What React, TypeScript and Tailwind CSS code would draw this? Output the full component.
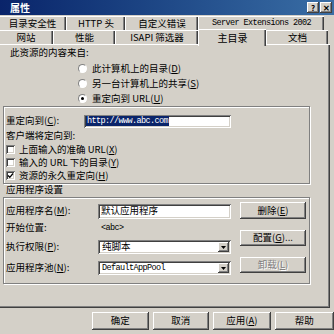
import React from "react";

const raised =
  "bg-[#d4d0c8] shadow-[inset_-1px_-1px_#404040,inset_1px_1px_#ffffff,inset_-2px_-2px_#808080,inset_2px_2px_#d4d0c8]";
const sunken =
  "shadow-[inset_1px_1px_#808080,inset_-1px_-1px_#ffffff,inset_2px_2px_#404040,inset_-2px_-2px_#d4d0c8]";
const etched = "border border-[#808080] shadow-[1px_1px_#ffffff,inset_1px_1px_#ffffff]";
const latin = "font-['Liberation_Mono',monospace] text-[8.5px] tracking-[-0.6px]";

function U({ children }: { children: React.ReactNode }) {
  return <span className="underline">{children}</span>;
}

function Radio({ checked, children }: { checked?: boolean; children: React.ReactNode }) {
  return (
    <div className="flex h-[15px] items-center gap-[5px]">
      <span className="relative flex h-[9px] w-[9px] items-center justify-center rounded-full border border-t-[#808080] border-l-[#808080] border-b-white border-r-white bg-white">
        {checked && <span className="h-[3px] w-[3px] rounded-full bg-black" />}
      </span>
      <span>{children}</span>
    </div>
  );
}

function Check({ checked, children }: { checked?: boolean; children: React.ReactNode }) {
  return (
    <div className="flex h-[13px] items-center gap-[4px]">
      <span className={`flex h-[9px] w-[9px] items-center justify-center bg-white ${sunken}`}>
        {checked && (
          <svg width="7" height="7" viewBox="0 0 7 7">
            <path d="M1 3.5 L2.8 5.3 L6 1.5" stroke="#000" strokeWidth="1.3" fill="none" />
          </svg>
        )}
      </span>
      <span>{children}</span>
    </div>
  );
}

function Select({ value }: { value: string }) {
  return (
    <div className={`flex h-[14px] w-[133px] items-center bg-white p-[2px] ${sunken}`}>
      <span className={`flex-1 pl-[2px] leading-none ${/^[A-Za-z]/.test(value) ? latin : ""}`}>{value}</span>
      <span className={`flex h-[10px] w-[11px] items-center justify-center ${raised}`}>
        <svg width="5" height="3" viewBox="0 0 5 3">
          <path d="M0 0 H5 L2.5 3 Z" fill="#000" />
        </svg>
      </span>
    </div>
  );
}

function Button({
  children,
  className = "",
  disabled,
}: {
  children: React.ReactNode;
  className?: string;
  disabled?: boolean;
}) {
  return (
    <div
      className={`flex items-center justify-center ${raised} ${
        disabled ? "text-[#808080] [text-shadow:1px_1px_#ffffff]" : ""
      } ${className}`}
    >
      {children}
    </div>
  );
}

function Tab({
  label,
  w,
  className = "",
  mono,
}: {
  label: string;
  w: string;
  className?: string;
  mono?: boolean;
}) {
  return (
    <div
      className={`flex h-full items-center justify-center border-t border-l border-t-white border-l-white shadow-[inset_-1px_0_#404040,inset_-2px_0_#808080] ${w} ${className}`}
    >
      <span className={mono ? latin : ""}>{label}</span>
    </div>
  );
}

export default function App() {
  return (
    <div className="h-[334px] w-[334px] overflow-hidden bg-[#d4d0c8] font-['Noto_Sans_CJK_SC',sans-serif] text-[9.5px] leading-none text-black">
      {/* Title bar */}
      <div className="flex h-[15px] items-center bg-gradient-to-r from-[#0a246a] to-[#3a6ea5] pr-[2px]">
        <span className="pl-[10px] text-[10px] font-bold text-white">属性</span>
        <div className="ml-auto flex gap-[1px]">
          <Button className="h-[11px] w-[12px] text-[8px] font-bold">?</Button>
          <Button className="h-[11px] w-[12px] text-[8px] font-bold">✕</Button>
        </div>
      </div>

      {/* Tabs row 1 */}
      <div className="mt-[1px] flex h-[14px] pr-[6px]">
        <Tab label="目录安全性" w="w-[68px] -ml-[2px]" />
        <Tab label="HTTP 头" w="w-[59px]" />
        <Tab label="自定义错误" w="w-[73px]" />
        <Tab label="Server Extensions 2002" w="w-[126px]" mono />
      </div>

      {/* Tabs row 2 */}
      <div className="relative z-10 flex h-[14px] items-end pr-[4px]">
        <Tab label="网站" w="w-[55px] -ml-[2px]" className="h-[14px]" />
        <Tab label="性能" w="w-[62px]" className="h-[14px]" />
        <Tab label="ISAPI 筛选器" w="w-[83px]" className="h-[14px]" />
        <div className="-mb-[2px] flex h-[17px] w-[68px] items-center justify-center border-t border-l border-t-white border-l-white bg-[#d4d0c8] shadow-[inset_-1px_0_#404040,inset_-2px_0_#808080] text-[10px]">
          主目录
        </div>
        <Tab label="文档" w="w-[62px]" className="h-[14px]" />
      </div>

      {/* Panel */}
      <div className="mr-[4px] flex h-[264px] flex-col border-t border-t-white shadow-[inset_-1px_-1px_#404040,inset_-2px_-2px_#808080]">
        <div className="mt-[2px] flex h-[12px] items-center pl-[10px]">此资源的内容来自:</div>

        <div className="mt-[2px] flex flex-col pl-[78px]">
          <Radio>
            此计算机上的目录(<U>D</U>)
          </Radio>
          <Radio>
            另一台计算机上的共享(<U>S</U>)
          </Radio>
          <Radio checked>
            重定向到 URL(<U>U</U>)
          </Radio>
        </div>

        {/* Redirect group */}
        <div className={`ml-[3px] flex h-[78px] w-[307px] flex-col pl-[2px] ${etched}`}>
          <div className="mt-[8px] flex h-[12px] items-center">
            <span className="w-[78px]">
              重定向到(<U>C</U>):
            </span>
            <div className={`flex h-[13px] w-[147px] items-center bg-white px-[2px] ${sunken}`}>
              <span className={`bg-[#0a246a] px-[1px] py-[1px] text-white ${latin}`}>
                http://www.abc.com
              </span>
            </div>
          </div>
          <div className="mt-[3px] flex h-[12px] items-center">客户端将定向到:</div>
          <div className="mt-[1px] flex flex-col">
            <Check>
              上面输入的准确 URL(<U>X</U>)
            </Check>
            <Check>
              输入的 URL 下的目录(<U>Y</U>)
            </Check>
            <Check checked>
              资源的永久重定向(<U>H</U>)
            </Check>
          </div>
        </div>

        <div className="flex h-[12px] items-center pl-[6px]">应用程序设置</div>

        {/* App settings group */}
        <div className={`ml-[3px] mt-[1px] flex h-[87px] w-[307px] pl-[2px] ${etched}`}>
          <div className="flex w-[234px] flex-col">
            <div className="mt-[5px] flex h-[16px] items-center">
              <span className="w-[92px]">
                应用程序名(<U>M</U>):
              </span>
              <div className={`flex h-[15px] w-[133px] items-center bg-white px-[3px] ${sunken}`}>
                默认应用程序
              </div>
            </div>
            <div className="flex h-[18px] items-center">
              <span className="w-[95px]">开始位置:</span>
              <span className={latin}>&lt;abc&gt;</span>
            </div>
            <div className="mt-[2px] flex h-[16px] items-center">
              <span className="w-[92px]">
                执行权限(<U>P</U>):
              </span>
              <Select value="纯脚本" />
            </div>
            <div className="mt-[5px] flex h-[16px] items-center">
              <span className="w-[92px]">
                应用程序池(<U>N</U>):
              </span>
              <Select value="DefaultAppPool" />
            </div>
          </div>
          <div className="flex flex-col">
            <Button className="mt-[4px] h-[17px] w-[66px]">
              删除(<U>E</U>)
            </Button>
            <Button className="mt-[11px] h-[16px] w-[66px]">
              配置(<U>G</U>)...
            </Button>
            <Button disabled className="mt-[11px] h-[16px] w-[66px]">
              卸载(<U>L</U>)
            </Button>
          </div>
        </div>
      </div>

      {/* Bottom buttons */}
      <div className="mt-[4px] flex gap-[4px] pl-[92px]">
        <Button className="h-[18px] w-[57px]">确定</Button>
        <Button className="h-[18px] w-[57px]">取消</Button>
        <Button className="h-[18px] w-[58px]">
          应用(<U>A</U>)
        </Button>
        <Button className="h-[18px] w-[60px]">帮助</Button>
      </div>
    </div>
  );
}
